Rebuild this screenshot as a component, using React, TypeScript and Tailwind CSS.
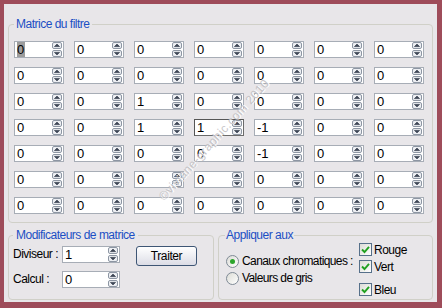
import React from 'react';

const FONT = { fontFamily: '"Liberation Sans", Arial, sans-serif' };

const MATRIX = [
  ['0', '0', '0', '0', '0', '0', '0'],
  ['0', '0', '0', '0', '0', '0', '0'],
  ['0', '0', '1', '0', '0', '0', '0'],
  ['0', '0', '1', '1', '-1', '0', '0'],
  ['0', '0', '0', '0', '-1', '0', '0'],
  ['0', '0', '0', '0', '0', '0', '0'],
  ['0', '0', '0', '0', '0', '0', '0'],
];

function Arrow({ up }: { up?: boolean }) {
  return (
    <svg width="10" height="7" viewBox="0 0 10 7" className="block">
      <rect x="0.5" y="0.5" width="9" height="6" rx="1.5" fill="#eceef2" stroke="#8d96a3" />
      <path
        d={up ? 'M2.5 4.6 L5 2.1 L7.5 4.6 Z' : 'M2.5 2.4 L5 4.9 L7.5 2.4 Z'}
        fill="#3e4656"
        stroke="#3e4656"
        strokeWidth="0.8"
        strokeLinejoin="round"
      />
    </svg>
  );
}

function Spin() {
  return (
    <div className="flex flex-col gap-px mr-px">
      <Arrow up />
      <Arrow />
    </div>
  );
}

function Field({ value, w, selected, focused }: { value: string; w: string; selected?: boolean; focused?: boolean }) {
  return (
    <div
      className={`flex items-center h-[17px] bg-white border ${w} ${
        focused ? 'border-[#6b6b6b] border-t-[#555] border-l-[#555]' : 'border-[#a7adb6]'
      }`}
    >
      <span className="flex-1 pl-[2px] text-[13px] leading-[13px] text-black">
        <span className={selected ? 'bg-[#9c9c9c] pr-[1px]' : ''}>{value}</span>
      </span>
      <Spin />
    </div>
  );
}

function Radio({ on, label }: { on?: boolean; label: string }) {
  return (
    <div className="flex items-center gap-[3px] h-[14px]">
      <div className="w-[13px] h-[13px] rounded-full border border-[#7f8a96] bg-gradient-to-br from-[#dcdcd6] to-white flex items-center justify-center">
        {on && <div className="w-[5px] h-[5px] rounded-full bg-[#2ca52c]" />}
      </div>
      <span className="text-[12px] tracking-[-0.6px] leading-none">{label}</span>
    </div>
  );
}

function Check({ label }: { label: string }) {
  return (
    <div className="flex items-center gap-[2px] h-[13px]">
      <div className="w-[13px] h-[13px] border border-[#56708a] bg-gradient-to-br from-[#dcdcd6] to-white flex items-center justify-center">
        <svg width="9" height="9" viewBox="0 0 9 9">
          <path d="M1 4.5 L3.5 7 L8 1.8" fill="none" stroke="#21a121" strokeWidth="1.9" />
        </svg>
      </div>
      <span className="text-[12px] tracking-[-0.5px] leading-none">{label}</span>
    </div>
  );
}

export default function App() {
  return (
    <div className="w-[442px] h-[308px] bg-[#9e4c5a] pt-[4px] pl-[4px] pr-[5px] pb-[6px]" style={FONT}>
      <div className="relative h-full bg-[#e8e6e9] px-[4px] pt-[13px] text-black">
        <fieldset className="border border-[#d0d0c8] rounded-[4px] pl-[5px] pb-[8px]">
          <legend className="px-[2px] text-[12px] leading-[14px] tracking-[-0.5px] text-[#1b4fc4]">
            Matrice du filtre
          </legend>
          <div className="grid grid-cols-[repeat(7,50px)] gap-x-[10px] gap-y-[9px] mt-[10px]">
            {MATRIX.map((row, r) =>
              row.map((v, c) => (
                <Field
                  key={`${r}-${c}`}
                  value={v}
                  w="w-[50px]"
                  selected={r === 0 && c === 0}
                  focused={r === 3 && c === 3}
                />
              ))
            )}
          </div>
        </fieldset>

        <div className="flex gap-[4px] mt-[5px]">
          <fieldset className="w-[206px] h-[72px] border border-[#d0d0c8] rounded-[4px] pl-[4px]">
            <legend className="px-[3px] text-[12px] leading-[14px] tracking-[-0.5px] text-[#1b4fc4]">
              Modificateurs de matrice
            </legend>
            <div className="flex items-start mt-[3px]">
              <div className="flex flex-col gap-[7px]">
                <div className="flex items-center">
                  <span className="w-[49px] text-[12px] tracking-[-0.5px]">Diviseur :</span>
                  <Field value="1" w="w-[58px]" />
                </div>
                <div className="flex items-center">
                  <span className="w-[49px] text-[12px] tracking-[-0.5px]">Calcul :</span>
                  <Field value="0" w="w-[58px]" />
                </div>
              </div>
              <button className="ml-[16px] mt-[1px] w-[61px] h-[20px] rounded-[3px] border border-[#3e5675] bg-gradient-to-b from-white to-[#dcdde6] text-[12px] tracking-[-0.4px] leading-none">
                Traiter
              </button>
            </div>
          </fieldset>

          <fieldset className="flex-1 h-[72px] border border-[#d0d0c8] rounded-[4px] pl-[7px]">
            <legend className="-ml-[1px] px-[1px] text-[12px] leading-[14px] tracking-[-0.5px] text-[#1b4fc4]">
              Appliquer aux
            </legend>
            <div className="flex">
              <div className="flex flex-col gap-[3px] mt-[12px] w-[133px]">
                <Radio on label="Canaux chromatiques :" />
                <Radio label="Valeurs de gris" />
              </div>
              <div className="flex flex-col mt-[1px]">
                <Check label="Rouge" />
                <div className="h-[4px]" />
                <Check label="Vert" />
                <div className="h-[10px]" />
                <Check label="Bleu" />
              </div>
            </div>
          </fieldset>
        </div>

        <div
          className="absolute left-[132px] top-[129px] w-[152px] text-center rotate-[-48deg] text-[12px] tracking-[0.5px] text-[#c6c4c7] pointer-events-none whitespace-nowrap"
          style={{ textShadow: '1px 1px 0 #ffffff' }}
        >
          ©viviane-graphic.com 2010
        </div>
      </div>
    </div>
  );
}
